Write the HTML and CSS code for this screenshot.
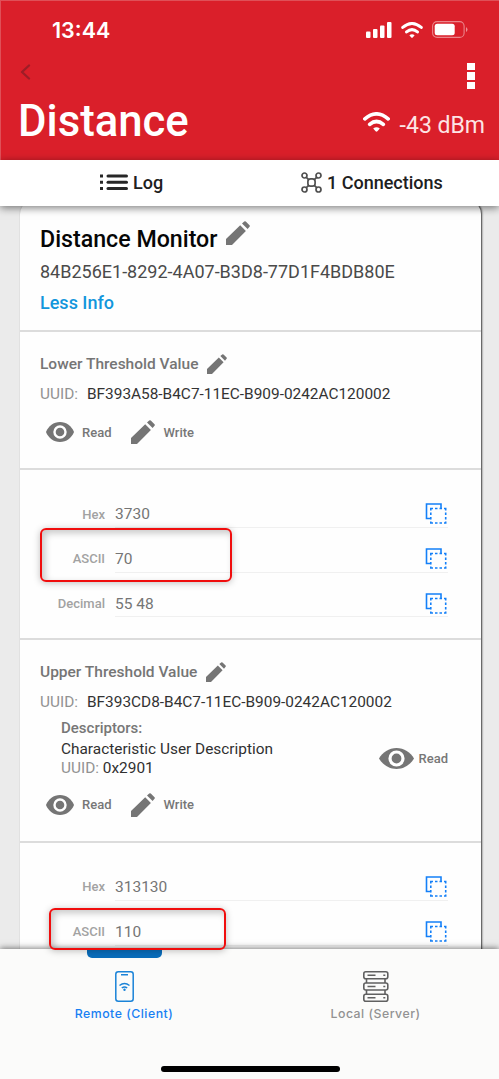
FILE: index.html
```html
<!DOCTYPE html>
<html lang="en">
<head>
<meta charset="utf-8">
<title>Distance</title>
<link rel="stylesheet" href="styles.css">
</head>
<body>
<svg class="defs" aria-hidden="true">
  <symbol id="pencil" viewBox="0 0 24 24"><path d="M0 24V18L14.2 4.3L19.9 9.9L6 24ZM16 2.5L18.2.6Q19 0 19.8.6L23.5 4.3Q24.2 5 23.5 5.8L21.6 8Z"/></symbol>
  <symbol id="eye" viewBox="0 0 28 20"><path d="M14 0C7.6 0 2.4 4 0 10c2.4 6 7.6 10 14 10s11.6-4 14-10C25.600 4 20.400 0 14 0z"/><circle cx="14" cy="10" r="5.500" fill="none" stroke="#fff" stroke-width="2.400"/></symbol>
  <symbol id="eye-wide" viewBox="0 0 35 21"><path d="M17.500 0C10 0 3.500 4.500 0 10.500c3.500 6 10 10.500 17.500 10.500S31.500 16.500 35 10.500C31.500 4.500 25 0 17.500 0z"/><circle cx="17.500" cy="10.500" r="6.500" fill="none" stroke="#fff" stroke-width="3.200"/></symbol>
  <symbol id="copy" viewBox="0 0 22 22"><path d="M5.500 15.500H1.500V1H16V5" fill="none" stroke="#1480f8" stroke-width="1.600"/><path d="M5.800 7.500V5.500H8M10 5.500H12.500M14.500 5.500H17M19 5.500H20.700V7.500M20.700 9.500V12M20.700 14V16.500M20.700 18.500V20H19M17 20H14.500M12.500 20H10M8 20H5.800V18.500M5.800 16.500V14M5.800 12V9.500" fill="none" stroke="#1480f8" stroke-width="1.600"/></symbol>
  <symbol id="wifi" viewBox="0 0 27 20"><path d="M1.900 6.800Q13.500 -3 25.100 6.800M6.700 12.400Q13.500 6.600 20.300 12.400" fill="none" stroke="currentColor" stroke-width="3.700" stroke-linecap="round"/><path d="M10.200 16.600Q13.500 13.800 16.800 16.600L14.400 19.300Q13.500 20.200 12.600 19.300Z" fill="currentColor"/></symbol>
</svg>
<div class="screen">
  <header class="header">
    <div class="status">
      <span class="time">13:44</span>
      <div class="status-icons">
        <svg width="26" height="16" viewBox="0 0 26 16" fill="#fff"><rect y="9.500" width="4.500" height="6.500" rx="1"/><rect x="7" y="7" width="4.500" height="9" rx="1"/><rect x="14" y="3.500" width="4.500" height="12.500" rx="1"/><rect x="21" width="4.500" height="16" rx="1"/></svg>
        <svg class="status-wifi" width="22" height="16"><use href="#wifi"/></svg>
        <svg width="36" height="17" viewBox="0 0 36 17"><rect x=".6" y=".6" width="31.500" height="15.800" rx="4.500" fill="none" stroke="#fff" stroke-opacity=".45" stroke-width="1.100"/><rect x="2.700" y="2.800" width="20" height="11.400" rx="2.500" fill="#fff"/><path d="M34 6q1.500 1 1.500 2.500T34 11z" fill="#fff" fill-opacity=".5"/></svg>
      </div>
    </div>
    <div class="toolbar">
      <svg class="back" width="11" height="16" viewBox="0 0 11 16"><path d="M9 1.500L2 8L9 14.500" fill="none" stroke="#9d1d27" stroke-width="2.300" stroke-linecap="round" stroke-linejoin="round"/></svg>
      <div class="kebab"><i></i><i></i><i></i></div>
    </div>
    <div class="heading">
      <h1>Distance</h1>
      <div class="signal"><svg width="27" height="20"><use href="#wifi"/></svg><span>-43 dBm</span></div>
    </div>
  </header>
  <div class="tabs">
    <div class="tab tab-log">
      <svg width="28" height="17" viewBox="0 0 28 17" fill="#272727"><path d="M0 .5h3v3H0zM0 6.800h3v3H0zM0 13h3v3H0z"/><rect x="6.500" y=".5" width="21.500" height="3" rx="1.500"/><rect x="6.500" y="6.800" width="21.500" height="3" rx="1.500"/><rect x="6.500" y="13" width="21.500" height="3" rx="1.500"/></svg>
      <span>Log</span>
    </div>
    <div class="tab tab-conn">
      <svg width="21" height="21" viewBox="0 0 21 21" fill="none" stroke="#505050" stroke-width="1.700"><rect x="6.900" y="6.900" width="7.200" height="7.200" rx="2.700"/><circle cx="3.500" cy="3.500" r="2.500"/><circle cx="17.500" cy="3.500" r="2.500"/><circle cx="3.500" cy="17.500" r="2.500"/><circle cx="17.500" cy="17.500" r="2.500"/><path d="M5.300 5.300l2.400 2.400M15.700 5.300l-2.400 2.400M5.300 15.700l2.400-2.400M15.700 15.700l-2.400-2.400"/></svg>
      <span>1 Connections</span>
    </div>
  </div>
  <main class="content">
    <section class="card">
      <div class="service">
        <div class="service-name"><h2>Distance Monitor</h2><svg width="24" height="24"><use href="#pencil"/></svg></div>
        <div class="service-id">84B256E1-8292-4A07-B3D8-77D1F4BDB80E</div>
        <div class="less">Less Info</div>
      </div>
      <div class="char">
        <div class="char-name"><h3>Lower Threshold Value</h3><svg width="20" height="20"><use href="#pencil"/></svg></div>
        <div class="char-id"><span>UUID:</span><b>BF393A58-B4C7-11EC-B909-0242AC120002</b></div>
        <div class="actions"><svg width="28" height="20"><use href="#eye"/></svg><span class="read">Read</span><svg width="24" height="24"><use href="#pencil"/></svg><span>Write</span></div>
      </div>
      <div class="values">
        <div class="row"><label>Hex</label><div class="field"><span>3730</span><svg width="22" height="22"><use href="#copy"/></svg></div></div>
        <div class="row"><label>ASCII</label><div class="field"><span>70</span><svg width="22" height="22"><use href="#copy"/></svg></div></div>
        <div class="row"><label>Decimal</label><div class="field"><span>55 48</span><svg width="22" height="22"><use href="#copy"/></svg></div></div>
      </div>
      <div class="char">
        <div class="char-name upper"><h3>Upper Threshold Value</h3><svg width="20" height="20"><use href="#pencil"/></svg></div>
        <div class="char-id"><span>UUID:</span><b>BF393CD8-B4C7-11EC-B909-0242AC120002</b></div>
        <div class="descriptors">
          <div>
            <h4>Descriptors:</h4>
            <div class="desc-name">Characteristic User Description</div>
            <div class="desc-id"><span>UUID:</span> 0x2901</div>
          </div>
          <div class="desc-read"><svg width="35" height="21"><use href="#eye-wide"/></svg><span>Read</span></div>
        </div>
        <div class="actions"><svg width="28" height="20"><use href="#eye"/></svg><span class="read">Read</span><svg width="24" height="24"><use href="#pencil"/></svg><span>Write</span></div>
      </div>
      <div class="values">
        <div class="row"><label>Hex</label><div class="field"><span>313130</span><svg width="22" height="22"><use href="#copy"/></svg></div></div>
        <div class="row"><label>ASCII</label><div class="field"><span>110</span><svg width="22" height="22"><use href="#copy"/></svg></div></div>
      </div>
    </section>
  </main>
  <nav class="nav">
    <div class="nav-items">
      <div class="nav-item active">
        <svg width="19" height="31" viewBox="0 0 19 31" fill="none" stroke="#1a83d8" stroke-width="1.500"><rect x=".8" y=".8" width="17.400" height="29.400" rx="2.500"/><path d="M6 3.800h7M4.500 14.500q5-4 10 0M6.800 17q2.700-2.200 5.400 0"/><circle cx="9.500" cy="18.800" r="1.200" fill="#1a83d8" stroke="none"/></svg>
        <span>Remote (Client)</span>
      </div>
      <div class="nav-item">
        <svg width="26" height="31" viewBox="0 0 26 31" fill="none" stroke="#606060" stroke-width="1.600"><rect x=".8" y=".8" width="24" height="7" rx="2"/><rect x=".8" y="12" width="24" height="7" rx="2"/><rect x=".8" y="23.200" width="24" height="7" rx="2"/><path d="M3.500 8v4M22 8v4M3.500 19v4M22 19v4M4.500 4.300h8M4.500 15.500h8M4.500 26.700h8M20.300 4.300h2M20.300 15.500h2M20.300 26.700h2"/></svg>
        <span>Local (Server)</span>
      </div>
    </div>
    <div class="indicator"></div>
    <div class="home-bar"></div>
  </nav>
  <div class="mark mark-lower"></div>
  <div class="mark mark-upper"></div>
</div>
</body>
</html>
```
FILE: styles.css
```css
* { box-sizing: border-box; }
body { margin: 0; font-family: Roboto, "Liberation Sans", sans-serif; }
h1, h2, h3, h4 { margin: 0; font-weight: 500; }
svg { display: block; flex: none; }
.defs { position: absolute; width: 0; height: 0; }
.screen { position: relative; width: 499px; height: 1079px; display: flex; flex-direction: column; overflow: hidden; background: #ebebeb; }
span, h1, h2, h3, h4, label, b { white-space: nowrap; }

.header { height: 160px; flex: none; background: #da1f2a; color: #fff; box-shadow: inset 1px 1px 0 #df5058; }
.status { height: 59px; padding: 0 31px 0 52px; display: flex; justify-content: space-between; align-items: center; }
.time { font: 600 21.500px/24px Inter, sans-serif; }
.status-icons { display: flex; align-items: center; gap: 9px; }
.toolbar { height: 34px; padding: 4px 24px 0 20px; display: flex; justify-content: space-between; }
.back { margin-top: 1px; }
.kebab { display: flex; flex-direction: column; gap: 2px; }
.kebab i { width: 8px; height: 7.300px; background: #fff; }
.heading { height: 56px; padding: 0 14px 0 18px; display: flex; justify-content: space-between; align-items: center; }
h1 { font-size: 43.700px; line-height: 54px; }
.signal { display: flex; align-items: center; gap: 10px; font-size: 23px; line-height: 28px; padding-top: 9px; }
.signal span { color: #fde4e5; }
.signal svg { margin-top: -7px; }

.tabs { position: relative; z-index: 2; height: 46px; flex: none; background: #fff; display: flex; box-shadow: 0 2px 8px rgba(0,0,0,.5); }
.tab { width: 249px; display: flex; align-items: center; font-size: 18px; font-weight: 500; color: #202020; }
.tab span { margin-top: -1px; }
.tab svg { margin-top: -1px; }
.tab-log { padding-left: 100px; gap: 5px; }
.tab-conn { padding-left: 52px; gap: 5px; }

.content { flex: 1; min-height: 0; overflow: hidden; padding: 0 18px 0 20px; }
.card { margin-top: -6px; height: 800px; background: #fefefe; border-radius: 14px 14px 0 0; box-shadow: 1px 0 2px rgba(0,0,0,.75); fill: #757575; }
.service, .char, .values { border-bottom: 2px solid #dcdcdc; }
.service { height: 132px; padding: 24px 20px 0; }
.service-name { display: flex; align-items: center; gap: 9px; height: 30px; }
.service-name svg { margin-top: -12px; }
h2 { font-size: 23.200px; line-height: 30px; color: #060606; }
.service-id { margin-top: 6px; font-size: 18px; line-height: 24px; color: #4a4a4a; }
.less { margin-top: 7px; font-size: 18px; line-height: 24px; font-weight: 500; color: #1296dc; }

.char { padding: 20px 20px 22px; }
.char-name { display: flex; align-items: center; gap: 9px; height: 24px; }
h3 { font-size: 15.500px; line-height: 24px; color: #757575; }
.char-id { margin-top: 8px; display: flex; gap: 9px; font-size: 15.400px; line-height: 20px; }
.char-id span, .desc-id span { color: #929292; }
.char-id b { font-weight: 400; color: #333; }
.actions { margin-top: 14px; height: 28px; padding-left: 6px; display: flex; align-items: center; gap: 8px; font-size: 13px; font-weight: 500; color: #777; }
.actions .read { margin-right: 12px; }

.values { padding: 13.500px 33px 20.500px 20px; }
.row { height: 44.670px; display: flex; }
label { width: 65px; padding-top: 21px; text-align: right; font-size: 13px; line-height: 20px; font-weight: 500; color: #a2a2a2; }
.field { flex: 1; margin-left: 10px; padding: 18px 1px 0 0; display: flex; justify-content: space-between; align-items: center; border-bottom: 1px solid #f0f0f0; font-size: 15.500px; color: #757575; }

.descriptors { margin-top: 6px; padding-left: 21px; display: flex; justify-content: space-between; }
h4 { font-size: 15px; line-height: 21px; color: #777; }
.desc-name { font-size: 15.400px; line-height: 20px; color: #303030; }
.desc-id { font-size: 15.400px; line-height: 18px; color: #303030; }
.desc-read { display: flex; align-items: center; gap: 5px; padding: 22px 13px 0 0; font-size: 13px; font-weight: 500; color: #777; }

.nav { position: relative; z-index: 2; height: 130px; flex: none; background: #fbfbfa; box-shadow: 0 -1px 6px rgba(0,0,0,.5); display: flex; flex-direction: column; justify-content: space-between; align-items: center; }
.nav-items { width: 100%; display: flex; padding: 22px 0 0; }
.nav-item { width: 248px; display: flex; flex-direction: column; align-items: center; gap: 4px; font: 500 12.300px/16px Inter, sans-serif; color: #929292; letter-spacing: .5px; }
.nav-item + .nav-item { width: 251px; padding-left: 4px; }
.nav-item.active { color: #187ff3; }
.indicator { position: absolute; left: 87px; top: 0; width: 75px; height: 9px; background: #096dbb; border-radius: 0 0 5px 5px; }
.home-bar { width: 179px; height: 6px; margin: 0 0 7px 2px; border-radius: 3px; background: #000; }

.mark { position: absolute; z-index: 3; border: 2px solid #f00d0d; border-radius: 6px; box-shadow: 0 1px 7px rgba(0,0,0,.25), inset 3px 3px 7px rgba(0,0,0,.22); }
.mark-lower { left: 40px; top: 528px; width: 192px; height: 54px; }
.mark-upper { left: 49px; top: 908px; width: 177px; height: 42px; }
```
